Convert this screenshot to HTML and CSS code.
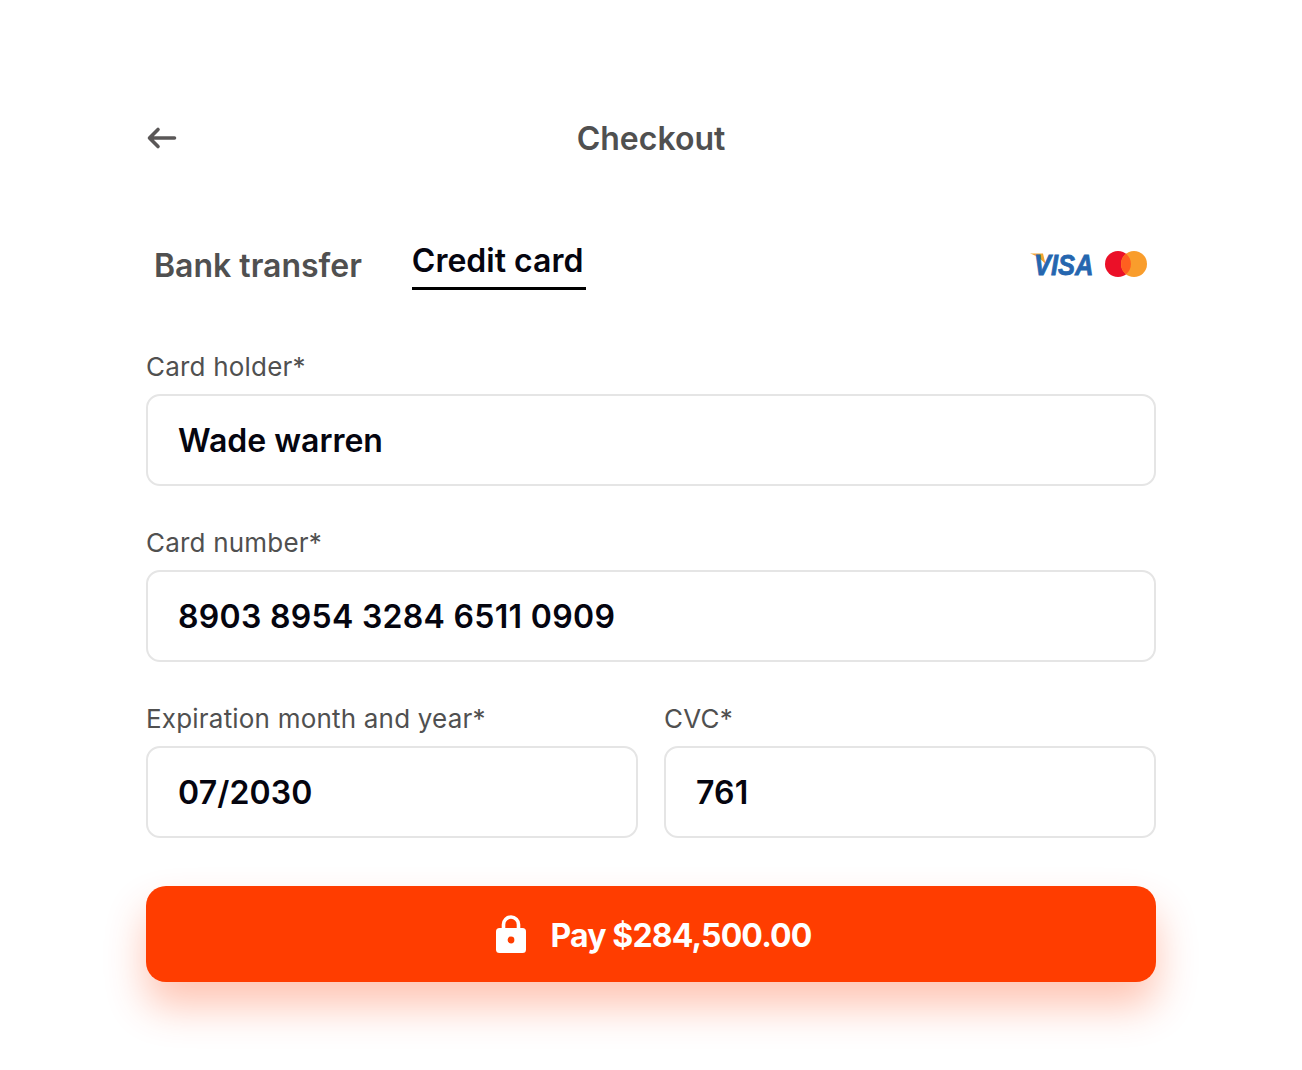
FILE: index.html
```html
<!DOCTYPE html>
<html lang="en">
<head>
    <meta charset="UTF-8">
    <meta name="viewport" content="width=device-width, initial-scale=1.0">
    <title>Checkout</title>
    <link rel="stylesheet" href="styles.css">
</head>
<body>
    <main class="checkout">
        <header class="top">
            <svg class="back" width="32" height="24" viewBox="0 0 32 24" fill="none">
                <path d="M28.500 12H3.500M12 3.500L3.500 12L12 20.500" stroke="#5a5757" stroke-width="3.600" stroke-linecap="round" stroke-linejoin="round"/>
            </svg>
            <h1>Checkout</h1>
        </header>

        <div class="tabs">
            <div class="tab">Bank transfer</div>
            <div class="tab active">Credit card</div>
            <div class="brands">
                <svg class="visa-logo" width="64" height="28" viewBox="0 0 64 28">
                    <path d="M0 3.500H13L15.500 14C11.500 9.500 6 5.500 0 3.500Z" fill="#f2a431"/>
                    <text class="visa" transform="translate(4 25) scale(1 1.180)">VISA</text>
                </svg>
                <svg width="42" height="26" viewBox="0 0 42 26">
                    <circle cx="13" cy="13" r="13" fill="#eb1028"/>
                    <circle cx="29" cy="13" r="13" fill="#f99d2c"/>
                    <path d="M21 2.800A13 13 0 0 1 21 23.200A13 13 0 0 1 21 2.800Z" fill="#ff5f1f"/>
                </svg>
            </div>
        </div>

        <div class="field">
            <div class="label">Card holder*</div>
            <div class="input">Wade warren</div>
        </div>
        <div class="field">
            <div class="label">Card number*</div>
            <div class="input num">8903 8954 3284 6511 0909</div>
        </div>
        <div class="row">
            <div class="field">
                <div class="label">Expiration month and year*</div>
                <div class="input num-short">07/2030</div>
            </div>
            <div class="field">
                <div class="label">CVC*</div>
                <div class="input num-short">761</div>
            </div>
        </div>

        <button class="pay">
            <svg width="30" height="38" viewBox="0 0 30 38">
                <path d="M7.500 15V9.500a7.500 7.500 0 0 1 15 0V15" fill="none" stroke="#fff" stroke-width="3.600"/>
                <rect x="0" y="13" width="30" height="25" rx="3.500" fill="#fff"/>
                <circle cx="15" cy="25" r="3.400" fill="#ff3d00"/>
            </svg>
            <span class="pay-text">Pay $284,500.00</span>
        </button>
    </main>
</body>
</html>
```

FILE: styles.css
```css
body {
    margin: 0;
    font-family: Inter, "Liberation Sans", sans-serif;
    background-color: #fff;
}
.checkout {
    width: 1010px;
    margin: 0 auto;
    padding-top: 118px;
    padding-bottom: 88px;
}
.top {
    display: flex;
    align-items: center;
    justify-content: center;
    height: 40px;
    position: relative;
}
.back {
    position: absolute;
    left: 0;
    top: 8px;
}
h1 {
    margin: 0;
    font-size: 32px;
    font-weight: 600;
    color: #505050;
}
.tabs {
    display: flex;
    align-items: flex-start;
    gap: 50px;
    height: 110px;
    margin-top: 82px;
    padding-left: 8px;
}
.tab {
    font-size: 32px;
    font-weight: 600;
    line-height: 40px;
    color: #505050;
    margin-top: 6px;
}
.tab.active {
    color: #05050f;
    margin-top: 1px;
    padding-right: 3px;
    padding-bottom: 6px;
    border-bottom: 3px solid #000;
}
.brands {
    display: flex;
    align-items: center;
    gap: 11px;
    margin-left: auto;
    margin-right: 9px;
    margin-top: 10px;
}
.visa-logo {
    overflow: visible;
}
.visa {
    font-family: "Liberation Sans", sans-serif;
    font-size: 25.500px;
    font-weight: 700;
    font-style: italic;
    fill: #2566af;
    stroke: #2566af;
    stroke-width: 0.7px;
}
.field {
    margin-bottom: 40px;
}
.label {
    font-size: 26px;
    line-height: 34px;
    letter-spacing: 0.2px;
    color: #505050;
    margin-bottom: 10px;
}
.input {
    height: 92px;
    box-sizing: border-box;
    display: flex;
    align-items: center;
    padding: 0 30px;
    border: 2px solid #e5e5e5;
    border-radius: 14px;
    font-size: 32px;
    font-weight: 600;
    color: #05050f;
}
.num {
    letter-spacing: 0.3px;
}
.num-short {
    letter-spacing: 0.15px;
}
.row {
    display: grid;
    grid-template-columns: 492px 492px;
    gap: 26px;
}
.row .field {
    margin-bottom: 0;
}
.pay {
    display: flex;
    align-items: center;
    justify-content: center;
    gap: 24px;
    width: 100%;
    height: 96px;
    margin-top: 48px;
    padding-left: 12px;
    border: none;
    border-radius: 20px;
    background-color: #ff3d00;
    color: #fff;
    font-family: inherit;
    font-size: 32px;
    font-weight: 700;
    box-shadow: 0 24px 40px rgba(255, 61, 0, 0.3);
}
.pay-text {
    letter-spacing: -0.85px;
    padding-top: 2px;
}
```
